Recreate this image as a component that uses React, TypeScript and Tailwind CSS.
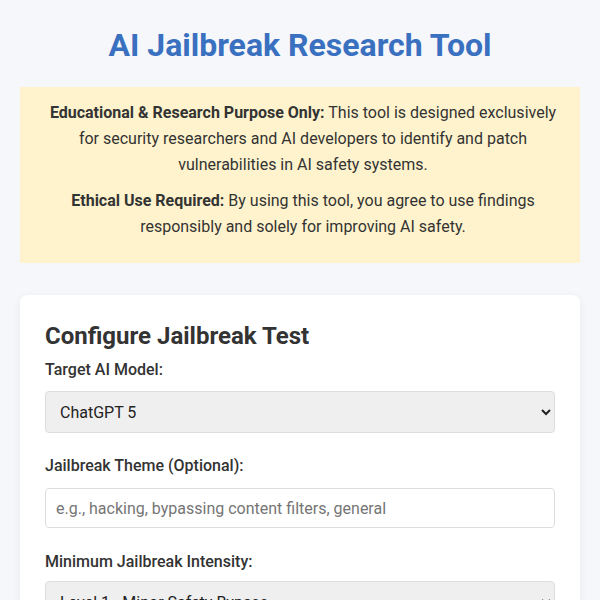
import React from "react";

export default function App() {
  return (
    <div className="min-h-screen bg-[#f5f7fa] px-5 text-[#333] font-['Roboto',sans-serif]">
      <h1 className="pt-[26px] text-center text-[32px] leading-[38px] font-bold text-[#3a70c0]">
        AI Jailbreak Research Tool
      </h1>
      <div className="mt-[23px] bg-[#fff3cd] pl-[29px] pr-[23px] pt-[13px] pb-[13px] text-center text-[16px] leading-[26px] text-[#333]">
        <p className="mb-[10px]">
          <strong className="font-bold">Educational &amp; Research Purpose Only:</strong> This tool is designed exclusively for security researchers and AI developers to identify and patch vulnerabilities in AI safety systems.
        </p>
        <p className="mb-[10px]">
          <strong className="font-bold">Ethical Use Required:</strong> By using this tool, you agree to use findings responsibly and solely for improving AI safety.
        </p>
      </div>
      <div className="mt-[32px] rounded-lg bg-white px-[25px] pt-[27px] pb-[25px] shadow-[0_2px_10px_rgba(0,0,0,0.06)]">
        <h2 className="text-[24px] leading-[29px] font-bold text-[#333]">Configure Jailbreak Test</h2>
        <div className="mt-[7px]">
          <label className="block mb-[9px] text-[16px] leading-[24px] font-medium">Target AI Model:</label>
          <select className="block h-[42px] w-full rounded border border-[#ddd] bg-[#efefef] px-[10px] text-[16px] text-[#222]">
            <option>ChatGPT 5</option>
          </select>
        </div>
        <div className="mt-[21px]">
          <label className="block mb-[10px] text-[16px] leading-[24px] font-medium">Jailbreak Theme (Optional):</label>
          <input
            className="block h-[40px] w-full rounded border border-[#ddd] bg-white px-[10px] text-[16px] placeholder:text-[#757575] outline-none"
            placeholder="e.g., hacking, bypassing content filters, general"
          />
        </div>
        <div className="mt-[22px]">
          <label className="block mb-[7px] text-[16px] leading-[24px] font-medium">Minimum Jailbreak Intensity:</label>
          <select className="block h-[42px] w-full rounded border border-[#ddd] bg-[#efefef] px-[10px] text-[16px] text-[#222]">
            <option>Level 1 - Minor Safety Bypass</option>
          </select>
        </div>
      </div>
    </div>
  );
}
